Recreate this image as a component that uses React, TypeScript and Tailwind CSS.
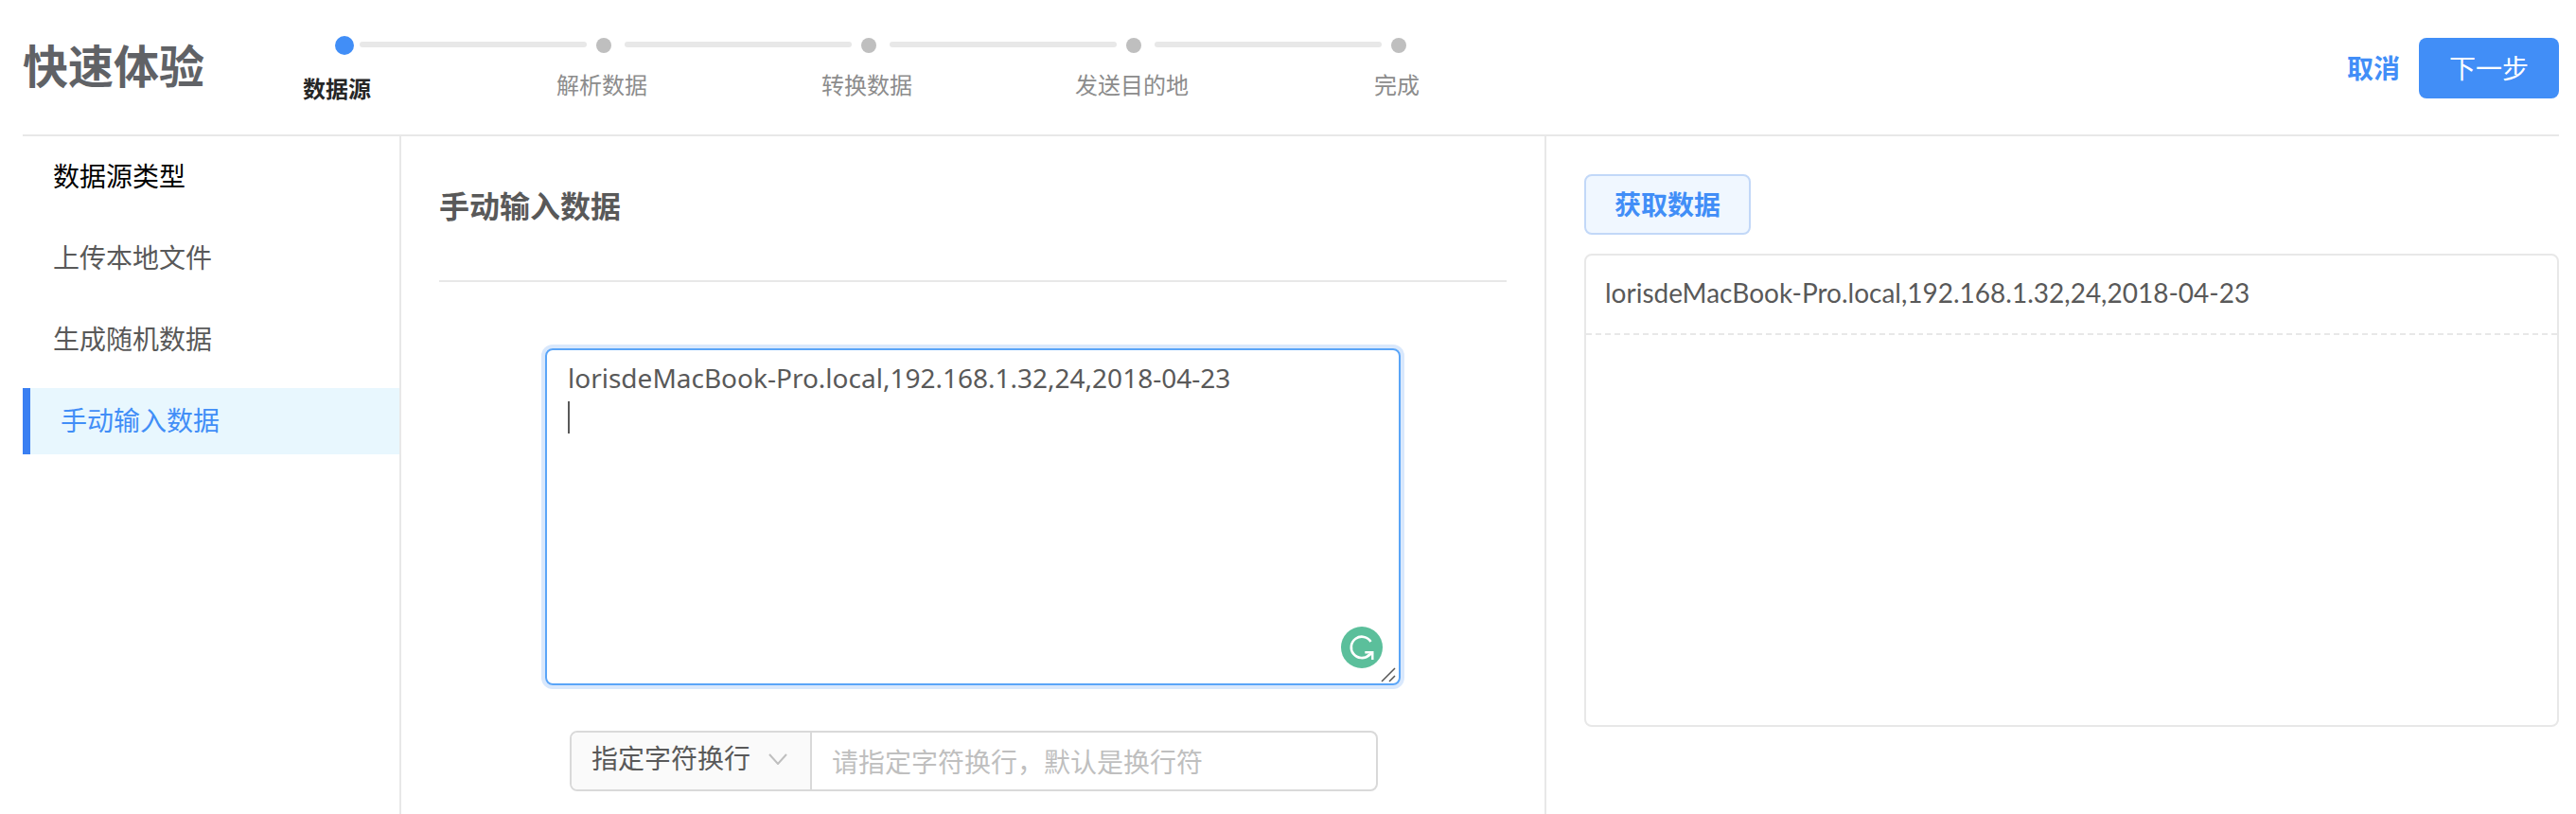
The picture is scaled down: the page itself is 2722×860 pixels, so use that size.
import { useState } from "react";

type SourceItem = {
  key: string;
  label: string;
};

const steps = ["数据源", "解析数据", "转换数据", "发送目的地", "完成"];

const sources: SourceItem[] = [
  { key: "upload", label: "上传本地文件" },
  { key: "random", label: "生成随机数据" },
  { key: "manual", label: "手动输入数据" },
];

const sample = "lorisdeMacBook-Pro.local,192.168.1.32,24,2018-04-23";

// Progress dots with the connecting lines, labels below
const Steps = () => (
  <div className="ml-[70px] mt-[38px]">
    <div className="flex h-5 items-center pl-[68px]" aria-hidden="true">
      {steps.map((step, i) =>
        i === 0 ? (
          <span key={step} className="mr-[6px] size-5 rounded-full bg-[#418ef7]" />
        ) : (
          <div key={step} className="flex items-center">
            <span className="mb-[2px] h-[6px] w-60 rounded-sm bg-[#e8e8e8]" />
            <span className="ml-[10px] mr-[14px] size-4 rounded-full bg-[#bfbfbf]" />
          </div>
        )
      )}
    </div>
    <ol className="mt-4 flex gap-[140px] text-2xl leading-8">
      {steps.map((step, i) => (
        <li
          key={step}
          className={
            i === 0
              ? "w-[140px] pt-1 text-center font-bold text-[#262626]"
              : "w-[140px] text-center text-[#8c8c8c]"
          }
        >
          {step}
        </li>
      ))}
    </ol>
  </div>
);

const GrammarBadge = () => (
  <svg
    className="pointer-events-none absolute bottom-[18px] right-[19px] size-11"
    viewBox="0 0 44 44"
    fill="none"
    aria-hidden="true"
  >
    <circle cx="22" cy="22" r="22" fill="#5bbf9b" />
    <path d="M31.5 16A11.2 11.2 0 1 0 29.5 30.2" stroke="#fff" strokeWidth="2.6" />
    <path d="M25.3 27.3h8V35" stroke="#fff" strokeWidth="2.4" />
    <path d="M33.5 27.3l-4.8 3.6" stroke="#fff" strokeWidth="2.8" />
  </svg>
);

const ResizeGrip = () => (
  <svg
    className="pointer-events-none absolute bottom-[3px] right-[5px] size-4"
    viewBox="0 0 16 16"
    stroke="#555"
    strokeWidth="1.5"
    aria-hidden="true"
  >
    <path d="M1 15L15 1M9 15l6-6" />
  </svg>
);

const App = () => {
  const [active, setActive] = useState("manual");
  const [content, setContent] = useState(sample + "\n");
  const [touched, setTouched] = useState(false);
  const [rows] = useState<string[]>([sample]);

  return (
    <div className="flex min-h-screen flex-col bg-white pl-6 pr-[18px] font-['Noto_Sans','Noto_Sans_CJK_SC',sans-serif] text-[28px] text-[#595959]">
      <header className="flex h-36 items-start border-b-2 border-[#e8e8e8]">
        <h1 className="mt-[34px] w-48 text-5xl leading-[72px] font-bold text-[#606266]">
          快速体验
        </h1>
        <Steps />
        <div className="ml-auto mt-10 flex items-center">
          <button type="button" className="mr-5 h-16 font-bold text-[#418ef7]">
            取消
          </button>
          <button
            type="button"
            className="h-16 rounded-lg bg-[#418ef7] px-8 text-white"
          >
            下一步
          </button>
        </div>
      </header>

      <div className="flex flex-1">
        {/* Source type menu */}
        <nav className="flex w-[400px] shrink-0 flex-col gap-4 border-r-2 border-[#e8e8e8] pt-2">
          <h2 className="pb-[2px] pl-8 leading-[68px] text-black">数据源类型</h2>
          {sources.map((item) => (
            <button
              key={item.key}
              type="button"
              onClick={() => setActive(item.key)}
              className={
                item.key === active
                  ? "border-l-8 border-[#3a7ff2] bg-[#e8f7fe] pb-[2px] pl-8 text-left leading-[68px] text-[#418ef7]"
                  : "pb-[2px] pl-8 text-left leading-[68px]"
              }
            >
              {item.label}
            </button>
          ))}
        </nav>

        {/* Manual input */}
        <main className="min-w-0 flex-1 px-10">
          <h2 className="border-b-2 border-[#e8e8e8] pb-[54px] pt-[50px] text-[32px] leading-[48px] font-bold">
            手动输入数据
          </h2>
          <div className="px-28 pt-[70px]">
            <div className="relative">
              <textarea
                aria-label="手动输入数据"
                value={content}
                onFocus={() => setTouched(true)}
                onChange={(e) => setContent(e.target.value)}
                className="block h-[356px] w-full resize-none rounded-lg border-2 border-[#5aa5f8] px-[22px] py-2 leading-[42px] shadow-[0_0_0_4px_#d9e8fc] outline-none"
              />
              {/* Resting cursor until the box takes the focus */}
              {!touched && (
                <span
                  className="pointer-events-none absolute left-6 top-14 h-[34px] w-[2px] bg-[#595959]"
                  aria-hidden="true"
                />
              )}
              <GrammarBadge />
              <ResizeGrip />
            </div>
            <div className="ml-[26px] mr-6 mt-12 flex h-16 overflow-hidden rounded-lg border-2 border-[#d9d9d9]">
              <div className="relative w-[254px] shrink-0 border-r-2 border-[#d9d9d9] bg-[#fafafa]">
                <select
                  aria-label="换行方式"
                  className="h-full w-full appearance-none pb-[6px] pl-[21px] outline-none"
                >
                  <option>指定字符换行</option>
                </select>
                <svg
                  className="pointer-events-none absolute right-[24px] top-[22px] h-3 w-5"
                  viewBox="0 0 20 12"
                  fill="none"
                  stroke="#bfbfbf"
                  strokeWidth="2"
                  aria-hidden="true"
                >
                  <path d="M1 1l9 10 9-10" />
                </svg>
              </div>
              <input
                type="text"
                aria-label="换行字符"
                placeholder="请指定字符换行，默认是换行符"
                className="min-w-0 flex-1 px-[21px] pt-[2px] outline-none placeholder:text-[#bfbfbf]"
              />
            </div>
          </div>
        </main>

        {/* Fetched rows */}
        <section className="w-2/5 border-l-2 border-[#e8e8e8] pl-10 pt-10">
          <button
            type="button"
            className="block h-16 rounded-lg border-2 border-[#c2d8f8] bg-[#f0f7ff] px-[30px] font-bold text-[#418ef7]"
          >
            获取数据
          </button>
          <ul className="mt-5 h-[500px] rounded-lg border-2 border-[#e8e8e8] font-['Lato','Noto_Sans_CJK_SC',sans-serif]">
            {rows.map((row) => (
              <li
                key={row}
                className="border-b-2 border-dashed border-[#e8e8e8] px-5 pb-[22px] pt-[18px] leading-[42px]"
              >
                {row}
              </li>
            ))}
          </ul>
        </section>
      </div>
    </div>
  );
};

export default App;
